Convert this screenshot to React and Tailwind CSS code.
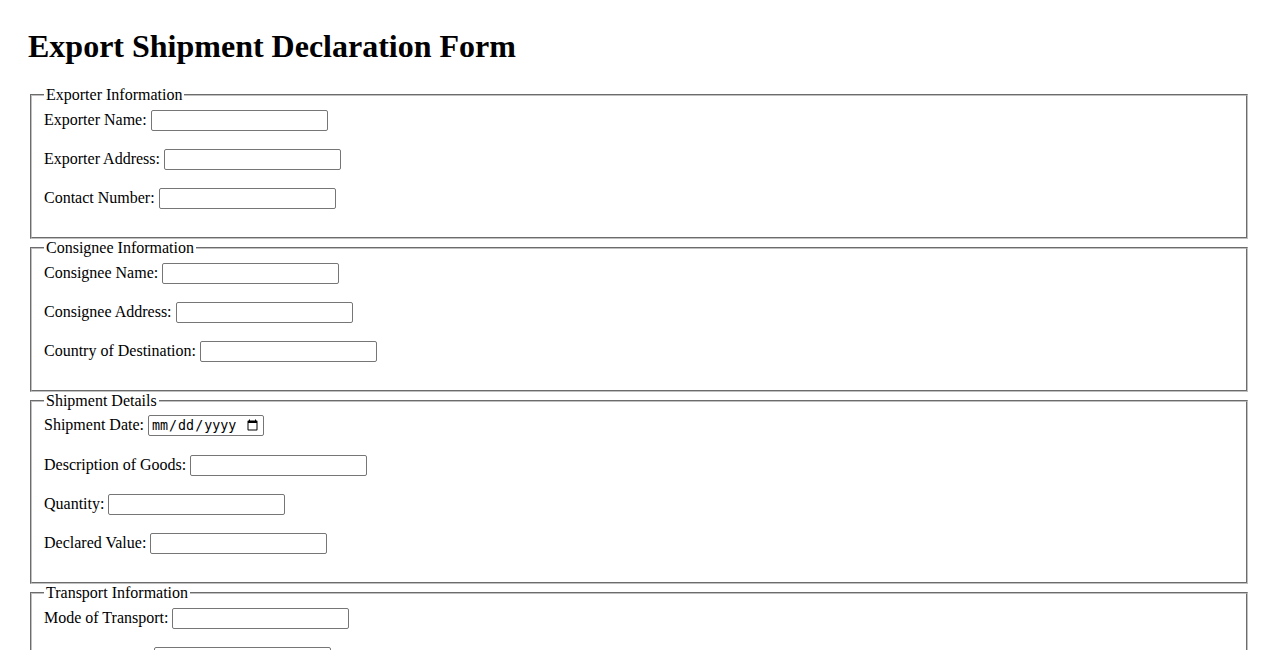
const sections = [
  {
    legend: 'Exporter Information',
    fields: [
      { label: 'Exporter Name:' },
      { label: 'Exporter Address:' },
      { label: 'Contact Number:' },
    ],
  },
  {
    legend: 'Consignee Information',
    fields: [
      { label: 'Consignee Name:' },
      { label: 'Consignee Address:' },
      { label: 'Country of Destination:' },
    ],
  },
  {
    legend: 'Shipment Details',
    fields: [
      { label: 'Shipment Date:', type: 'date' },
      { label: 'Description of Goods:' },
      { label: 'Quantity:' },
      { label: 'Declared Value:' },
    ],
  },
  {
    legend: 'Transport Information',
    fields: [
      { label: 'Mode of Transport:' },
      { label: 'Port of Loading:' },
      { label: 'Port of Discharge:' },
    ],
  },
]

function Field({ label, type }) {
  return (
    <div className={type === 'date' ? 'mb-[19px]' : 'mb-[18px]'}>
      <label>{label}</label>{' '}
      {type === 'date' ? (
        <input
          type="date"
          className="h-[21px] w-[116px] rounded-[2px] border border-[#767676] bg-white px-[2px] py-[1px] align-baseline font-['DejaVu_Sans_Mono',monospace] text-[13.33px] text-black"
        />
      ) : (
        <input
          type="text"
          className="h-[21px] w-[177px] rounded-[2px] border border-[#767676] bg-white px-[2px] py-[1px] align-baseline font-['Liberation_Sans',Arial,sans-serif] text-[13.33px] text-black"
        />
      )}
    </div>
  )
}

export default function App() {
  return (
    <div className="min-h-screen bg-white p-[28px] font-['Liberation_Serif','Times_New_Roman',serif] text-[16px] leading-[normal] text-black">
      <h1 className="mb-[21.44px] text-[32px] font-bold leading-[normal]">
        Export Shipment Declaration Form
      </h1>

      <form>
        {sections.map((s) => (
          <fieldset
            key={s.legend}
            className="mx-[2px] min-w-min border-2 border-[#c0c0c0] px-3 pt-[5.6px] pb-[10px] [border-style:groove]"
          >
            <legend className="px-[2px]">{s.legend}</legend>
            {s.fields.map((f) => (
              <Field key={f.label} {...f} />
            ))}
          </fieldset>
        ))}
      </form>
    </div>
  )
}
